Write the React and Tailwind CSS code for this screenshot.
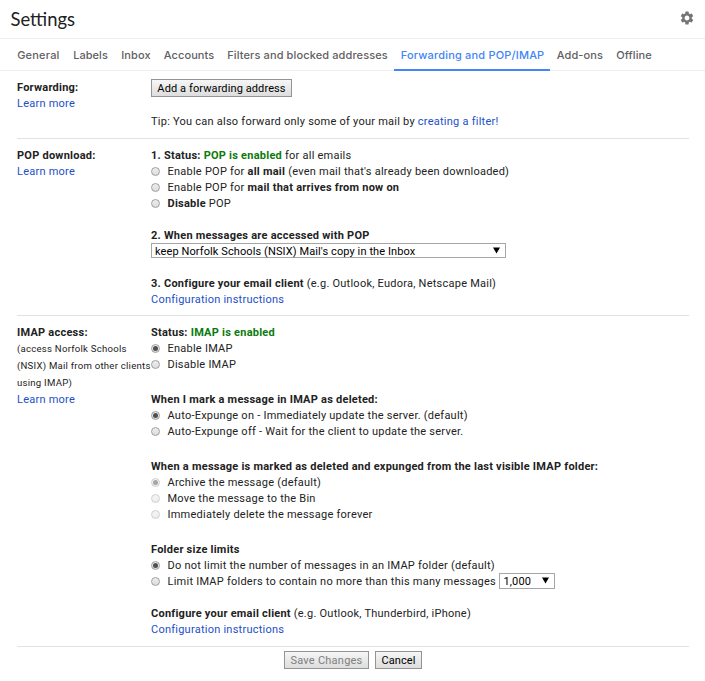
import { MdSettings } from "react-icons/md";

const tabs = [
  { name: "General", cls: "w-14 tracking-[0.2px]" },
  { name: "Labels", cls: "w-12 tracking-[0.05px]" },
  { name: "Inbox", cls: "w-[42.5px] tracking-[0.1px]" },
  { name: "Accounts", cls: "w-[63.5px] tracking-[0.1px]" },
  { name: "Filters and blocked addresses", cls: "w-[173.5px] tracking-[0.12px]" },
  { name: "Forwarding and POP/IMAP", cls: "w-[156px] tracking-[0.18px]", active: true },
  { name: "Add-ons", cls: "w-[59.5px] tracking-[0.1px]" },
  { name: "Offline", cls: "w-[50px] tracking-[0.1px]" },
];

const B = ({ children }) => <b className="font-bold">{children}</b>;
const Link = ({ children }) => <a className="text-[#1c4fc9]">{children}</a>;

function Radio({ checked, disabled, children }) {
  return (
    <label className="flex h-4 items-center whitespace-pre">
      <span
        className={
          "-mt-px mr-[7.5px] flex size-[9px] shrink-0 items-center justify-center rounded-full border border-[#a0a0a0] bg-linear-to-b from-[#eeeeee] to-[#dcdcdc] " +
          (disabled ? "opacity-50" : "")
        }
      >
        {checked && <span className="size-[5px] rounded-full bg-[#505050]" />}
      </span>
      <span>{children}</span>
    </label>
  );
}

function Section({ title, side, className, children }) {
  return (
    <section className={"ml-[17px] mr-4 flex border-[#e2e2e2] " + className}>
      <div className="w-[134px] shrink-0 whitespace-nowrap">
        <B>{title}</B>
        {side}
        <div><Link>Learn more</Link></div>
      </div>
      <div className="grow whitespace-nowrap">{children}</div>
    </section>
  );
}

const Arrow = () => (
  <svg className="mb-px h-[7px] w-[7px]" viewBox="0 0 7 7"><path d="M0 0.5h7L3.5 6.5z" fill="#000" /></svg>
);

export default function App() {
  return (
    <div className="h-[681px] w-[705px] overflow-hidden bg-white font-['Roboto',sans-serif] text-[11px] leading-4 tracking-[0.24px] text-[#222]">
      <header className="flex h-[39px] items-center justify-between border-b border-[#eeeeee] pl-[10.5px] pr-[10px]">
        <h1 className="font-['Lato',sans-serif] text-[18.4px] leading-6 tracking-normal text-[#202124]">Settings</h1>
        <MdSettings className="-mt-[2px] size-4 text-[#757575]" />
      </header>
      <nav className="flex h-8 border-b border-[#eeeeee] pl-[10.5px] font-['Inter',sans-serif] font-medium text-[#5f6063]">
        {tabs.map((t) => (
          <div
            key={t.name}
            className={
              "h-8 whitespace-nowrap pl-[6.7px] pt-2 " + t.cls + (t.active ? " border-b-2 border-[#4285f4] text-[#4285f4]" : "")
            }
          >
            {t.name}
          </div>
        ))}
      </nav>

      <Section title="Forwarding:" className="h-[68px] border-b pt-[9px]">
        <div className="-mt-px flex h-[18px] w-[141px] items-center justify-center border border-[#949494] bg-linear-to-b from-[#f6f6f6] to-[#dddddd] pt-[2px] tracking-[0.1px] text-black">
          Add a forwarding address
        </div>
        <div className="mt-[17px]">
          Tip: You can also forward only some of your mail by <Link>creating a filter!</Link>
        </div>
      </Section>

      <Section title="POP download:" className="h-[177px] border-b pt-[9px]">
        <div><B>1. Status: <span className="text-[#0b7a0b]">POP is enabled</span></B> for all emails</div>
        <Radio>Enable POP for <B>all mail</B> (even mail that's already been downloaded)</Radio>
        <Radio>Enable POP for <B>mail that arrives from now on</B></Radio>
        <Radio><B>Disable</B> POP</Radio>
        <div className="mt-4"><B>2. When messages are accessed with POP</B></div>
        <div className="-mt-px flex h-[15px] w-[355px] items-center justify-between border border-[#a6a6a6] pl-[3px] pr-[5px] tracking-[0.1px] text-black">
          <span className="pt-[2px]">keep Norfolk Schools (NSIX) Mail's copy in the Inbox</span>
          <Arrow />
        </div>
        <div className="mt-[18px]"><B>3. Configure your email client</B> (e.g. Outlook, Eudora, Netscape Mail)</div>
        <div><Link>Configuration instructions</Link></div>
      </Section>

      <Section
        title="IMAP access:"
        className="h-[331px] border-b pt-[9px]"
        side={
          <div className="-mt-px mb-px text-[9.6px] leading-[17px]">
            (access Norfolk Schools<br />(NSIX) Mail from other clients<br />using IMAP)
          </div>
        }
      >
        <div><B>Status: <span className="text-[#0b7a0b]">IMAP is enabled</span></B></div>
        <Radio checked>Enable IMAP</Radio>
        <Radio>Disable IMAP</Radio>
        <div className="mt-[19px]"><B>When I mark a message in IMAP as deleted:</B></div>
        <Radio checked>Auto-Expunge on - Immediately update the server. (default)</Radio>
        <Radio>Auto-Expunge off - Wait for the client to update the server.</Radio>
        <div className="mt-[19px]"><B>When a message is marked as deleted and expunged from the last visible IMAP folder:</B></div>
        <Radio checked disabled>Archive the message (default)</Radio>
        <Radio disabled>Move the message to the Bin</Radio>
        <Radio disabled>Immediately delete the message forever</Radio>
        <div className="mt-[19px]"><B>Folder size limits</B></div>
        <Radio checked>Do not limit the number of messages in an IMAP folder (default)</Radio>
        <div className="flex h-4 items-center">
          <Radio>Limit IMAP folders to contain no more than this many messages</Radio>
          <div className="-mt-[2px] ml-[2.5px] flex h-4 w-14 items-center justify-between border border-[#a6a6a6] pl-[4px] pr-[5px] tracking-[0.1px] text-black">
            <span className="pt-[2px]">1,000</span>
            <Arrow />
          </div>
        </div>
        <div className="mt-4"><B>Configure your email client</B> (e.g. Outlook, Thunderbird, iPhone)</div>
        <div><Link>Configuration instructions</Link></div>
      </Section>

      <footer className="flex gap-[6px] pl-[284px] pt-1">
        <div className="flex h-[18px] w-[85px] items-center justify-center border border-[#949494] bg-linear-to-b from-[#f6f6f6] to-[#dddddd] pt-[2px] text-[#808080]">
          Save Changes
        </div>
        <div className="flex h-[18px] w-[47px] items-center justify-center border border-[#949494] bg-linear-to-b from-[#f6f6f6] to-[#dddddd] pt-[2px] tracking-[0.1px] text-black">
          Cancel
        </div>
      </footer>
    </div>
  );
}
